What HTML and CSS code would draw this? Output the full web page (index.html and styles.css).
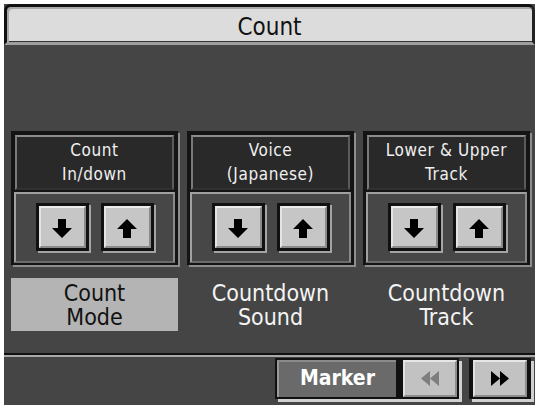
FILE: index.html
```html
<!DOCTYPE html>
<html>
<head>
<meta charset="utf-8">
<link rel="stylesheet" href="styles.css">
</head>
<body>
<div class="screen">
  <div class="title">Count</div>
  <div class="main">
    <div class="panels">
      <div class="panel">
        <div class="plabel">Count<br>In/down</div>
        <div class="pbtns">
          <div class="abtn"><div class="aface"><svg width="20" height="19" viewBox="0 0 20 19"><path d="M6 0H14V9H20L10 19L0 9H6Z" fill="#000"/></svg></div></div>
          <div class="abtn"><div class="aface"><svg width="20" height="19" viewBox="0 0 20 19"><path d="M6 19H14V10H20L10 0L0 10H6Z" fill="#000"/></svg></div></div>
        </div>
      </div>
      <div class="panel">
        <div class="plabel">Voice<br>(Japanese)</div>
        <div class="pbtns">
          <div class="abtn"><div class="aface"><svg width="20" height="19" viewBox="0 0 20 19"><path d="M6 0H14V9H20L10 19L0 9H6Z" fill="#000"/></svg></div></div>
          <div class="abtn"><div class="aface"><svg width="20" height="19" viewBox="0 0 20 19"><path d="M6 19H14V10H20L10 0L0 10H6Z" fill="#000"/></svg></div></div>
        </div>
      </div>
      <div class="panel">
        <div class="plabel">Lower &amp; Upper<br>Track</div>
        <div class="pbtns">
          <div class="abtn"><div class="aface"><svg width="20" height="19" viewBox="0 0 20 19"><path d="M6 0H14V9H20L10 19L0 9H6Z" fill="#000"/></svg></div></div>
          <div class="abtn"><div class="aface"><svg width="20" height="19" viewBox="0 0 20 19"><path d="M6 19H14V10H20L10 0L0 10H6Z" fill="#000"/></svg></div></div>
        </div>
      </div>
    </div>
    <div class="labels">
      <div class="lab sel">Count<br>Mode</div>
      <div class="lab">Countdown<br>Sound</div>
      <div class="lab">Countdown<br>Track</div>
    </div>
  </div>
  <div class="bottom">
    <div class="group">
      <div class="marker">Marker</div>
      <div class="tbtn"><svg width="18" height="15" viewBox="0 0 18 15"><path d="M9 0V15L0 7.5Z M18 0V15L9 7.5Z" fill="#7e7e7e"/></svg></div>
    </div>
    <div class="group single">
      <div class="tbtn"><svg width="18" height="15" viewBox="0 0 18 15"><path d="M0 0V15L9 7.5Z M9 0V15L18 7.5Z" fill="#000"/></svg></div>
    </div>
  </div>
</div>
</body>
</html>
```
FILE: styles.css
```css
html, body {
  margin: 0;
  padding: 0;
  background: #ffffff;
}
body {
  padding: 4px;
}
.screen {
  width: 531px;
  height: 401px;
  background: #454545;
  display: flex;
  flex-direction: column;
  font-family: "DejaVu Sans Condensed", "DejaVu Sans", sans-serif;
}
.title {
  box-sizing: border-box;
  height: 41px;
  background: #dcdcdc;
  border-top: 3px solid #111;
  border-left: 3px solid #111;
  border-right: 3px solid #222;
  border-bottom: 3px solid #9e9e9e;
  box-shadow: inset 2px 2px 0 #a8a8a8, inset 0 -1px 0 #333;
  border-radius: 7px 7px 0 0;
  color: #111;
  font-size: 24px;
  line-height: 30px;
  padding-top: 5px;
  text-align: center;
}
.main {
  box-sizing: border-box;
  height: 310px;
  padding: 86px 0 0 7px;
  border-bottom: 2px solid #111;
}
.panels {
  display: flex;
  gap: 9px;
}
.panel {
  box-sizing: border-box;
  width: 167px;
  height: 134px;
  background: #141414;
  padding: 4px 3px 2px 3px;
  box-shadow: 2px 2px 0 #8e8e8e;
  display: flex;
  flex-direction: column;
  gap: 2px;
}
.plabel {
  box-sizing: border-box;
  height: 55px;
  margin: 0 1px;
  background: #292929;
  border: 2px solid;
  border-color: #8c8c8c #5a5a5a #303030 #7a7a7a;
  color: #f0f0f0;
  font-size: 17px;
  letter-spacing: 0.6px;
  line-height: 24px;
  text-align: center;
  padding-top: 1px;
}
.pbtns {
  flex: 1;
  box-sizing: border-box;
  background: #474747;
  border: 2px solid;
  border-color: #a0a0a0 #8a8a8a #6a6a6a #a0a0a0;
  display: flex;
  justify-content: center;
  align-items: center;
  gap: 12px;
  padding-bottom: 2px;
}
.abtn {
  box-sizing: border-box;
  width: 53px;
  height: 48px;
  background: #111;
  padding: 3px;
  box-shadow: 2px 2px 0 #a4a4a4;
}
.aface {
  box-sizing: border-box;
  height: 100%;
  background: #c6c6c6;
  border: 2px solid;
  border-color: #ececec #8a8a8a #8a8a8a #e4e4e4;
  display: flex;
  align-items: center;
  justify-content: center;
  padding-top: 3px;
}
.labels {
  display: flex;
  gap: 9px;
  margin-top: 13px;
}
.lab {
  box-sizing: border-box;
  width: 167px;
  height: 53px;
  color: #f4f4f4;
  font-size: 23px;
  line-height: 24px;
  text-align: center;
  padding-top: 3px;
}
.lab.sel {
  background: #b4b4b4;
  color: #111;
}
.bottom {
  flex: 1;
  border-top: 2px solid #a8a8a8;
  display: flex;
  justify-content: flex-end;
  align-items: flex-start;
  gap: 10px;
  padding: 1px 4px 0 0;
}
.group {
  display: flex;
  gap: 7px;
  background: #111;
  padding: 2px;
  box-shadow: 3px 3px 0 #d0d0d0;
}
.group.single {
  padding: 2px 4px;
}
.marker {
  box-sizing: border-box;
  width: 119px;
  height: 37px;
  background: #6a6a6a;
  border-top: 2px solid #8a8a8a;
  border-left: 2px solid #9a9a9a;
  color: #ffffff;
  font-size: 21px;
  line-height: 33px;
  text-align: center;
  font-weight: bold;
}
.tbtn {
  box-sizing: border-box;
  width: 54px;
  height: 37px;
  background: #c2c2c2;
  border: 2px solid;
  border-color: #e6e6e6 #8e8e8e #8e8e8e #e0e0e0;
  display: flex;
  align-items: center;
  justify-content: center;
}
```
